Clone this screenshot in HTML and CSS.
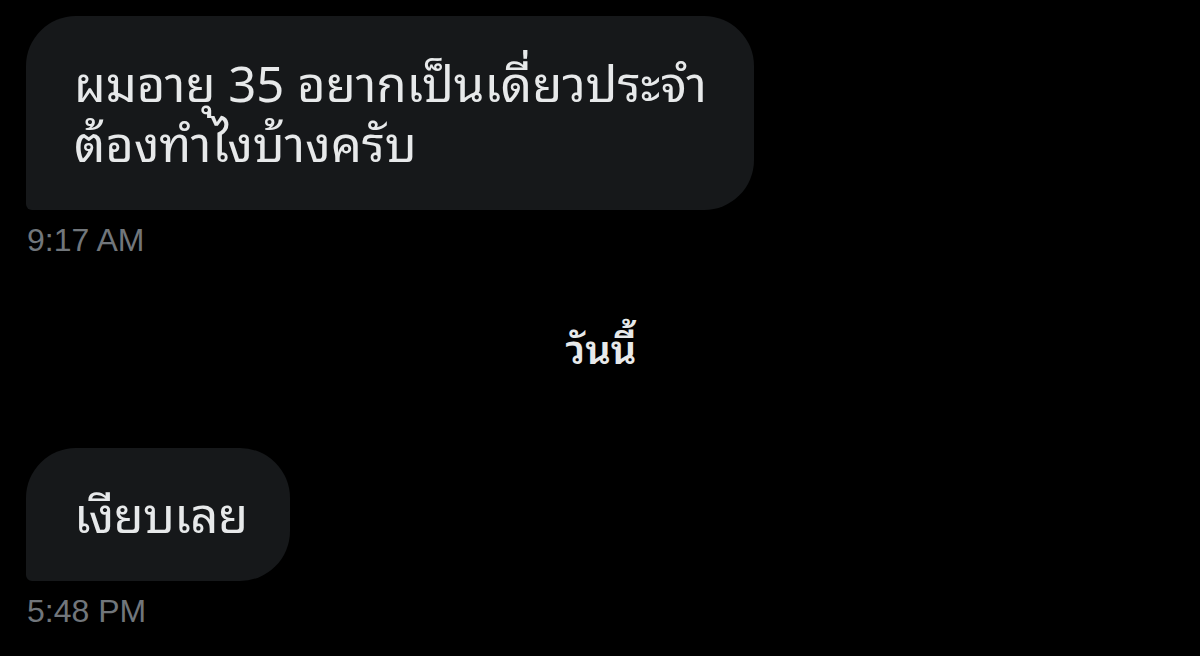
FILE: index.html
```html
<!DOCTYPE html>
<html lang="th">
<head>
<meta charset="utf-8">
<link rel="stylesheet" href="styles.css">
</head>
<body>
<div class="chat">
  <div class="msg">
    <div class="bubble">ผมอายุ 35 อยากเป็นเดี่ยวประจำ<br>ต้องทำไงบ้างครับ</div>
    <div class="time">9:17 AM</div>
  </div>
  <div class="day">วันนี้</div>
  <div class="msg">
    <div class="bubble bubble-short">เงียบเลย</div>
    <div class="time">5:48 PM</div>
  </div>
</div>
</body>
</html>
```
FILE: styles.css
```css
html, body {
  margin: 0;
  padding: 0;
  background: #000;
  width: 1200px;
  height: 656px;
  overflow: hidden;
}
.chat {
  display: flex;
  flex-direction: column;
  padding: 16px 26px 0 26px;
  font-family: "Noto Sans Thai Looped", "Noto Sans", "Liberation Sans", sans-serif;
}
.msg {
  display: flex;
  flex-direction: column;
  align-items: flex-start;
}
.bubble {
  background: #16181a;
  color: #e7e9ea;
  font-size: 49px;
  line-height: 60px;
  padding: 34px 47px 40px 48px;
  border-radius: 50px 50px 50px 6px;
}
.bubble-short {
  padding-top: 33px;
  padding-bottom: 40px;
  padding-right: 42px;
  letter-spacing: -0.5px;
}
.time {
  color: #71767b;
  font-family: "Liberation Sans", Arial, sans-serif;
  font-size: 32px;
  line-height: 36px;
  margin-top: 12px;
  padding-left: 1px;
}
.day {
  align-self: center;
  color: #e7e9ea;
  font-size: 40px;
  font-weight: 600;
  line-height: 50px;
  margin: 63px 0 77px 2px;
}
```
